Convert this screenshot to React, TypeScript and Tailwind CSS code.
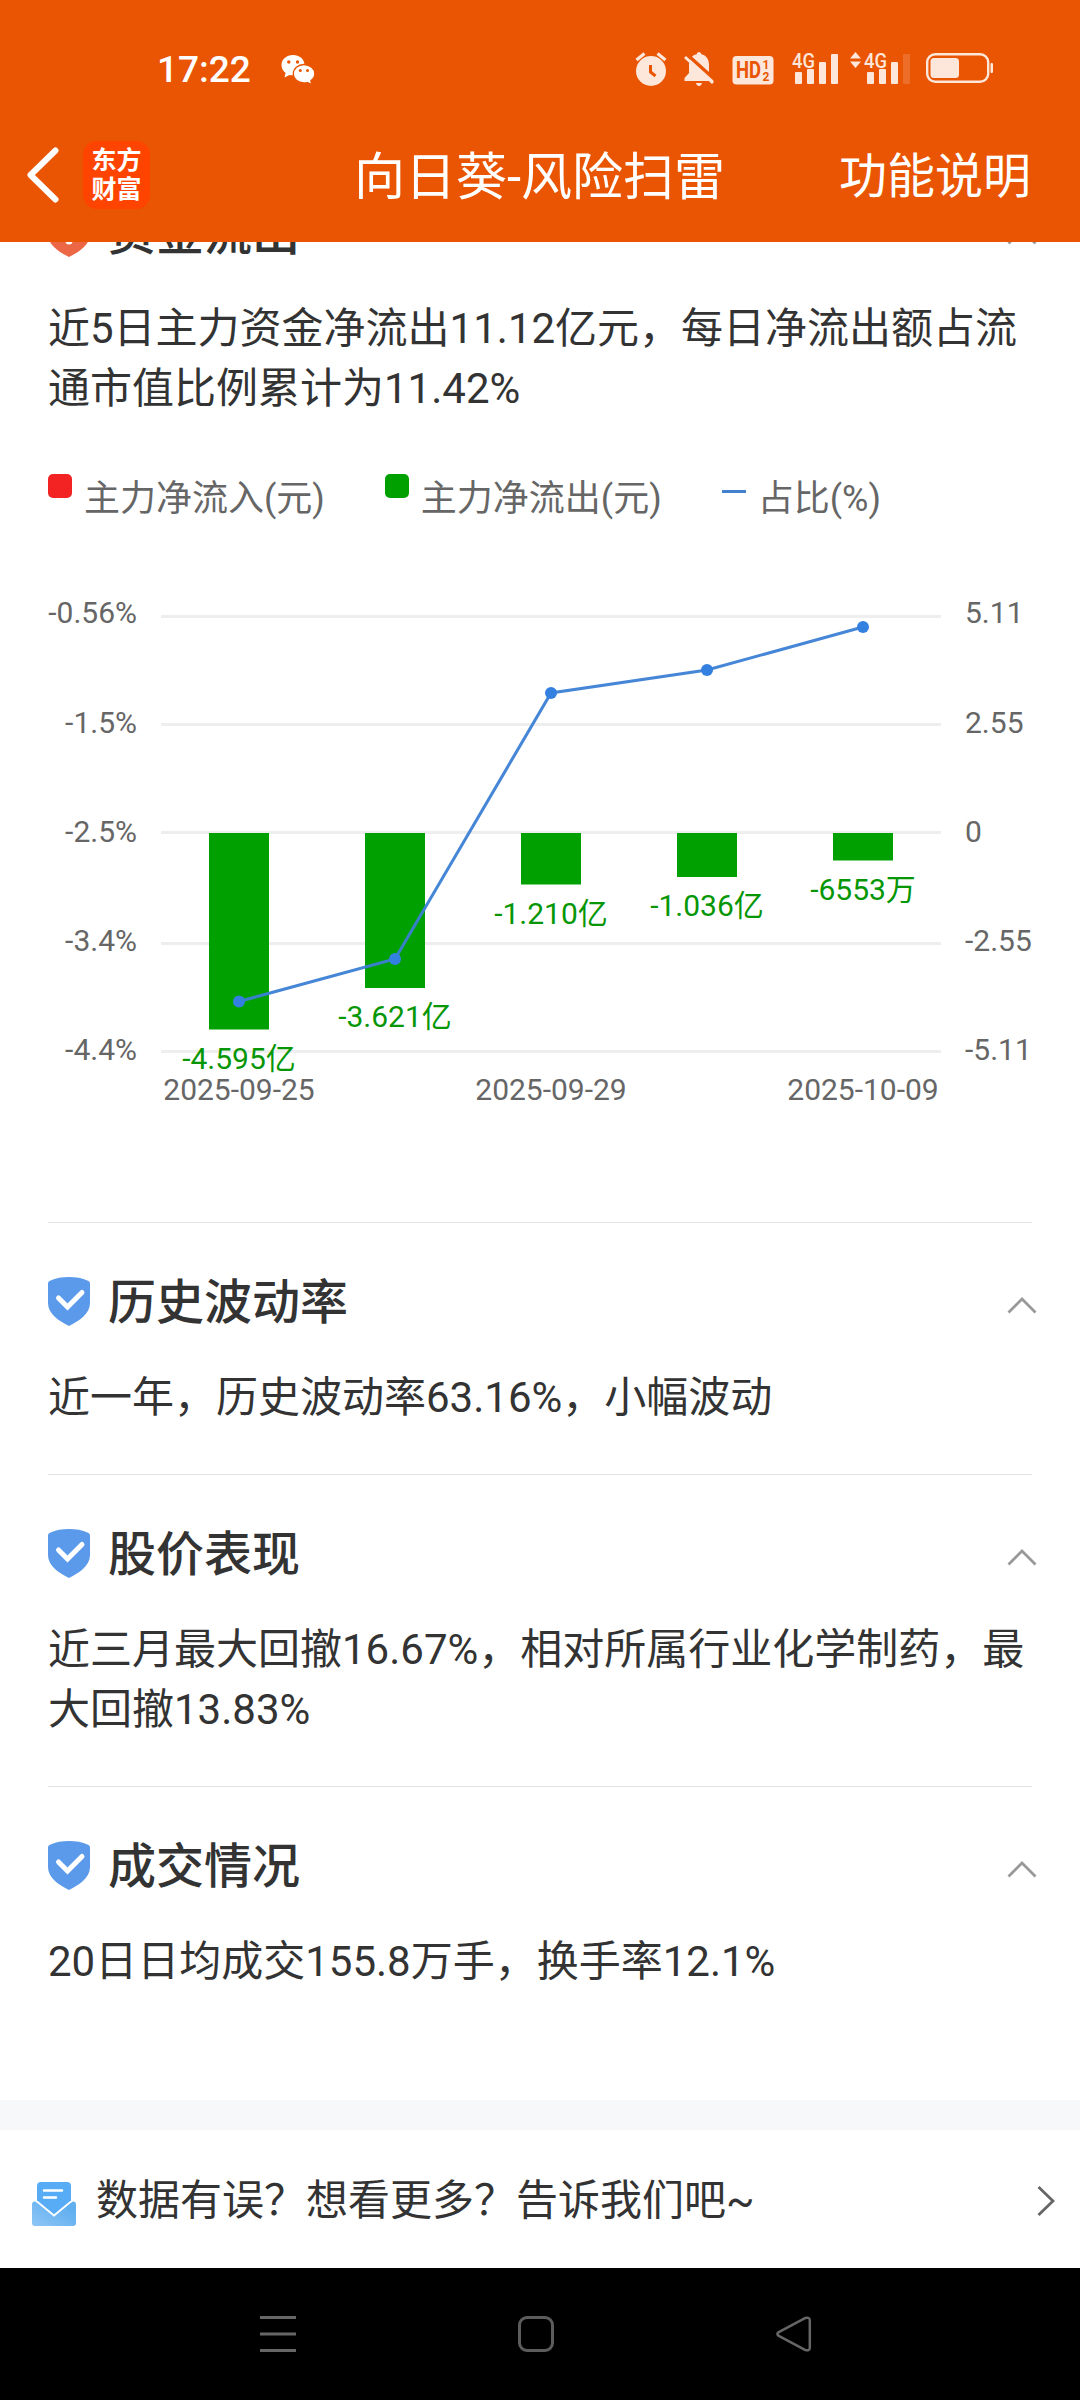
import type { ReactNode } from "react";

interface RiskItem {
  id: string;
  title: string;
  text: string;
}

interface FlowPoint {
  x: number;
  barEnd: number;
  lineY: number;
  label: string;
  date?: string;
}

const RISK_ITEMS: RiskItem[] = [
  { id: "volatility", title: "历史波动率", text: "近一年，历史波动率63.16%，小幅波动" },
  { id: "price",      title: "股价表现",   text: "近三月最大回撤16.67%，相对所属行业化学制药，最大回撤13.83%" },
  { id: "volume",     title: "成交情况",   text: "20日日均成交155.8万手，换手率12.1%" },
];

const FLOW: FlowPoint[] = [
  { x: 239, barEnd: 469.5, lineY: 441.5, label: "-4.595亿", date: "2025-09-25" },
  { x: 395, barEnd: 428,   lineY: 399,   label: "-3.621亿" },
  { x: 551, barEnd: 324.5, lineY: 133,   label: "-1.210亿", date: "2025-09-29" },
  { x: 707, barEnd: 317,   lineY: 110,   label: "-1.036亿" },
  { x: 863, barEnd: 300.5, lineY: 67,    label: "-6553万",  date: "2025-10-09" },
];

const AXIS = [
  { y: 56.5,  base: 63,  left: "-0.56%", right: "5.11" },
  { y: 164.5, base: 173, left: "-1.5%",  right: "2.55" },
  { y: 272.5, base: 282, left: "-2.5%",  right: "0" },
  { y: 383.5, base: 391, left: "-3.4%",  right: "-2.55" },
  { y: 491.5, base: 500, left: "-4.4%",  right: "-5.11" },
];

const BAR_TOP = 273;

function SignalBars({ x, weak }: { x: number; weak?: boolean }) {
  return (
    <>
      <text x={x - 3} y="16.500" fontSize="21" fontWeight="500" textLength="23" lengthAdjust="spacingAndGlyphs">4G</text>
      <rect x={x} y="21" width="7" height="12" rx="1" />
      <rect x={x + 12} y="18" width="7" height="15" rx="1" />
      <rect x={x + 24} y="11" width="7" height="22" rx="1" />
      <rect x={x + 36} y="3" width="7" height="30" rx="1" opacity={weak ? 0.18 : 1} />
    </>
  );
}

function StatusBar() {
  return (
    <div className="flex h-[138px] items-center pl-[157px] pr-[86px] text-white">
      <span className="text-[37px] leading-none font-medium">17:22</span>
      <svg className="ml-[30px] h-[30px] w-[34px]" viewBox="0 0 34 30" fill="currentColor">
        <path d="M12 1C5.400 1 .5 5.400.5 11c0 3.300 1.500 6 4.100 7.900L3.500 23.500l5-2.600c1.200.3 2.300.4 3.500.4 6.600 0 11.500-4.600 11.500-10.300S18.600 1 12 1Z" />
        <path
          d="M23 10.500c-6 0-10.700 4.100-10.700 9.300S17 29 23 29c1.200 0 2.300-.1 3.400-.5l4.600 2.200-1.200-4c2.500-1.700 4-4.200 4-7 0-5.100-4.800-9.200-10.800-9.200Z"
          stroke="#e95502"
          strokeWidth="1.300"
        />
        <g fill="#e95502">
          <circle cx="7.800" cy="8" r="1.700" />
          <circle cx="16.500" cy="8" r="1.700" />
          <circle cx="19.300" cy="16.500" r="1.500" />
          <circle cx="26.500" cy="16.500" r="1.500" />
        </g>
      </svg>

      <div className="ml-auto flex items-center text-[#fde6da]">
        <svg className="h-9 w-8" viewBox="0 0 32 36" fill="currentColor">
          <circle cx="16" cy="20" r="15" />
          <path d="M1.500 9 9.500 2.500M30.500 9 22.500 2.500" stroke="currentColor" strokeWidth="3.200" />
          <path d="M15.500 14v7l5 4" fill="none" stroke="#e95502" strokeWidth="3" />
        </svg>
        <svg className="ml-[17px] h-9 w-[30px]" viewBox="0 0 30 36" fill="currentColor">
          <path d="M15 1c-1.300 0-2 1-2.300 2.200C7.500 4.300 5 8.500 5 13.500V22L.5 27v3h29v-3L25 22v-8.500c0-5-2.500-9.200-7.700-10.300C17 2 16.300 1 15 1ZM12 32h6c-.4 2-1.500 3-3 3s-2.600-1-3-3Z" />
          <path d="M2.500 3 32 29.500" stroke="#e95502" strokeWidth="3.400" />
          <path d="M1 6 29 32" stroke="#fde6da" strokeWidth="3" />
        </svg>
        <svg className="ml-[18px] h-9 w-[42px] overflow-visible" viewBox="0 0 42 36" fill="currentColor">
          <rect x="0.500" y="5" width="41" height="28.500" rx="4" />
          <g fill="#e95502" fontWeight="700">
            <text x="4" y="27" fontSize="23" textLength="25" lengthAdjust="spacingAndGlyphs">HD</text>
            <text x="30.500" y="17.700" fontSize="12">1</text>
            <text x="30.500" y="29.700" fontSize="12">2</text>
          </g>
        </svg>
        <svg className="ml-[18px] h-9 w-[46px] overflow-visible" viewBox="0 0 46 36" fill="currentColor">
          <SignalBars x={3} />
        </svg>
        <svg className="ml-3 h-9 w-[60px] overflow-visible" viewBox="0 0 60 36" fill="currentColor">
          <path d="M0 7.500 5.500 1 11 7.500ZM0 10.500 5.500 17 11 10.500Z" />
          <SignalBars x={17} weak />
        </svg>
        <svg className="ml-4 h-9 w-[68px]" viewBox="0 0 68 36" fill="currentColor">
          <rect x="1.200" y="3.200" width="61" height="27.500" rx="8" fill="none" stroke="currentColor" strokeWidth="2.400" />
          <rect x="4.500" y="7" width="28.500" height="20" rx="3.500" />
          <rect x="64.500" y="12" width="2.500" height="10" rx="1" />
        </svg>
      </div>
    </div>
  );
}

function Header() {
  return (
    <header className="relative z-10 h-[242px] bg-[#e95502] text-white">
      <StatusBar />
      <div className="flex h-[74px] items-center pl-[27px] pr-[49px] text-[48px] leading-none">
        <svg className="h-14 w-8" viewBox="0 0 32 56" fill="none" stroke="currentColor" strokeWidth="6" strokeLinecap="round" strokeLinejoin="round">
          <path d="M28.500 3.500 3.500 28l25 24.500" />
        </svg>
        <div className="ml-6 flex h-[68px] w-[67px] flex-col items-center justify-center rounded-[14px] bg-[#ff4400] text-[25px] leading-[29px] font-bold">
          <span>东方</span>
          <span>财富</span>
        </div>
        <h1 className="ml-[204px] pt-1 text-[51px]">向日葵-风险扫雷</h1>
        <span className="ml-auto pt-1">功能说明</span>
      </div>
    </header>
  );
}

function Shield({ danger }: { danger?: boolean }) {
  return (
    <svg className="-mt-px h-[49px] w-[42px]" viewBox="0 0 42 49">
      <path
        d="M0 6.500Q0 4.500 2 3.800C8 1 14 0 21 0s13 1 19 3.800Q42 4.500 42 6.500V26c0 11-11 18-21 23C11 44 0 37 0 26Z"
        fill={danger ? "#eb6746" : "#5b99ea"}
      />
      {danger ? (
        <g fill="#fff">
          <rect x="18.500" y="11" width="5" height="17" rx="2.500" />
          <circle cx="21" cy="33" r="3.500" />
        </g>
      ) : (
        <path d="M10.500 21 19.500 30 34 15.500" fill="none" stroke="#fff" strokeWidth="5" strokeLinecap="round" />
      )}
    </svg>
  );
}

function RiskSection({ title, text, danger, children }: { title: string; text: string; danger?: boolean; children?: ReactNode }) {
  return (
    <section className="mx-12 border-t border-[#e2e2e2] pt-[47px]">
      <div className="flex h-16 items-center">
        <Shield danger={danger} />
        <h2 className="ml-[18px] pt-0.5 text-[48px] leading-none font-medium">{title}</h2>
        <svg className="-mr-[5px] ml-auto mt-1.5 h-[18px] w-[30px]" viewBox="0 0 30 18" fill="none" stroke="#999" strokeWidth="2.800">
          <path d="M1.500 16.500 15 3l13.500 13.500" />
        </svg>
      </div>
      <p className="mt-[34px] text-[42px] leading-[60px]">{text}</p>
      {children ?? <div className="h-[46px]" />}
    </section>
  );
}

function Legend() {
  return (
    <div className="mt-[54px] flex gap-[60px] text-[36px] leading-[48px] text-[#666]">
      <div className="flex gap-3">
        <span className="mt-px size-6 rounded-[5px] bg-[#f32323]" />
        <span className="mt-0.5 -mb-0.5">主力净流入(元)</span>
      </div>
      <div className="flex gap-3">
        <span className="mt-px size-6 rounded-[5px] bg-[#00a000]" />
        <span className="mt-0.5 -mb-0.5">主力净流出(元)</span>
      </div>
      <div className="flex gap-3">
        <span className="mt-[17px] h-[3px] w-6 bg-[#4381cf]" />
        <span className="mt-0.5 -mb-0.5">占比(%)</span>
      </div>
    </div>
  );
}

function FlowChart() {
  return (
    <svg className="-mx-12 mt-[39px] h-[662px] w-[1080px]" viewBox="0 0 1080 662" fontSize="30">
      {AXIS.map(a => (
        <g key={a.left} fill="#666">
          <line x1="161" x2="941" y1={a.y} y2={a.y} stroke="#eee" strokeWidth="3" />
          <text x="137" y={a.base} textAnchor="end">{a.left}</text>
          <text x="965" y={a.base}>{a.right}</text>
        </g>
      ))}
      {FLOW.map(p => (
        <g key={p.label} textAnchor="middle">
          <rect x={p.x - 30} y={BAR_TOP} width="60" height={p.barEnd - BAR_TOP} fill="#00a000" />
          <text x={p.x} y={p.barEnd + 39} fill="#069606">{p.label}</text>
          {p.date && <text x={p.x} y="539.500" fill="#666">{p.date}</text>}
        </g>
      ))}
      <polyline points={FLOW.map(p => `${p.x},${p.lineY}`).join(" ")} fill="none" stroke="#3b7fd4" strokeOpacity="0.950" strokeWidth="3" />
      {FLOW.map(p => (
        <circle key={p.x} cx={p.x} cy={p.lineY} r="6" fill="#3480e0" />
      ))}
    </svg>
  );
}

function Feedback() {
  return (
    <div className="flex h-[138px] items-center pl-8 pr-6">
      <svg className="mt-[9px] h-[44px] w-[44px]" viewBox="0 0 44 44">
        <defs>
          <linearGradient id="mail" x1="0" y1="1" x2="0.800" y2="0.300">
            <stop offset="0" stopColor="#8fc6f6" />
            <stop offset="1" stopColor="#62aff0" />
          </linearGradient>
        </defs>
        <path d="M5 4a4 4 0 0 1 4-4h26a4 4 0 0 1 4 4v20L22 38 5 24Z" fill="#58acf5" />
        <path d="M0 22.500C0 19.500 2.500 18.500 4.500 20.300L22 34 39.500 20.300C41.500 18.500 44 19.500 44 22.500V41a3 3 0 0 1-3 3H3a3 3 0 0 1-3-3Z" fill="url(#mail)" />
        <path d="M5 19.500 22 33.500l17-14" fill="none" stroke="#fff" strokeWidth="1.800" />
        <path d="M12 8.500h18M12 15.500h12" stroke="#fff" strokeWidth="2.500" strokeLinecap="round" />
      </svg>
      <span className="ml-5 pt-1 text-[42px] leading-[60px]">数据有误？想看更多？告诉我们吧~</span>
      <svg className="ml-auto mt-1 h-[32px] w-[20px]" viewBox="0 0 20 32" fill="none" stroke="#666" strokeWidth="2.800">
        <path d="M2.500 2 17 16 2.500 30" />
      </svg>
    </div>
  );
}

function NavBar() {
  return (
    <nav className="flex h-[132px] items-center bg-black pl-[260px] text-[#666]">
      <svg className="h-9 w-9" viewBox="0 0 36 36" stroke="currentColor" strokeWidth="3">
        <path d="M0 1.500h36M0 18h36M0 34.500h36" />
      </svg>
      <span className="ml-[222px] size-9 rounded-[9px] border-[3px] border-[#5c5c5c]" />
      <svg className="ml-[222px] h-9 w-9" viewBox="0 0 36 36" fill="none" stroke="currentColor" strokeWidth="2.500" strokeLinejoin="round">
        <path d="M2.300 16.300 29.500 1.900Q33.800.8 33.800 4.500v27Q33.800 35.200 29.500 34.100L2.300 19.700Q.6 18 2.300 16.300Z" />
      </svg>
    </nav>
  );
}

export default function App() {
  return (
    <div className="h-[2400px] w-[1080px] overflow-hidden bg-white font-['Roboto','Noto_Sans_CJK_SC',sans-serif] text-[#333]">
      <Header />
      <main className="-mt-[89px]">
        <RiskSection danger title="资金流出" text="近5日主力资金净流出11.12亿元，每日净流出额占流通市值比例累计为11.42%">
          <Legend />
          <FlowChart />
        </RiskSection>
        {RISK_ITEMS.map(item => (
          <RiskSection key={item.id} title={item.title} text={item.text} />
        ))}
      </main>
      <div className="mt-[62px] h-[30px] bg-[#f7f8fa]" />
      <Feedback />
      <NavBar />
    </div>
  );
}
